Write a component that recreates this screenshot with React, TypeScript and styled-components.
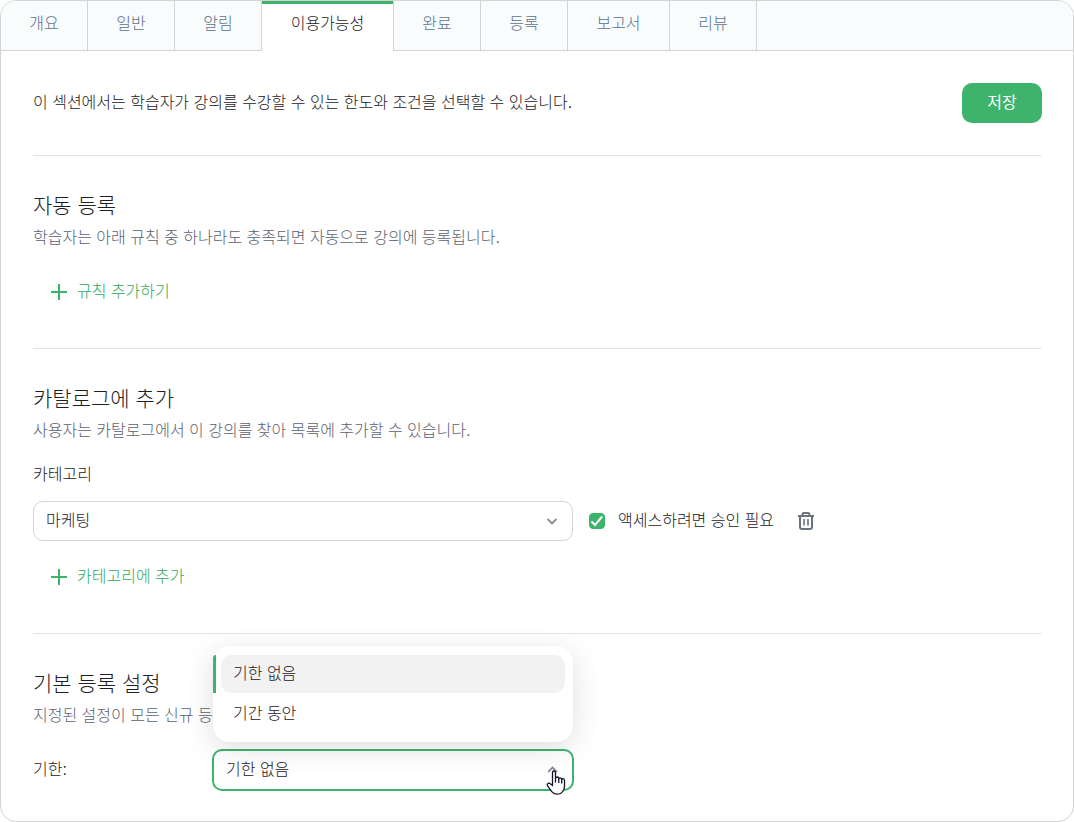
import React, { useState } from "react";
import styled, { createGlobalStyle } from "styled-components";

const GlobalStyle = createGlobalStyle`
  *, *::before, *::after { box-sizing: border-box; }
  body {
    margin: 0;
    background: #fff;
    color: #1c2024;
    font-family: "Liberation Sans", "Noto Sans CJK KR", sans-serif;
    font-size: 16px;
    font-weight: 300;
    line-height: 24px;
  }
  button, select, input { font: inherit; color: inherit; }
`;

const Card = styled.main`
  display: flex;
  flex-direction: column;
  min-height: 100vh;
  border: 1px solid #d4d4d4;
  border-radius: 16px;
  overflow: hidden;
  background: #fff;
`;

const TabBar = styled.nav`
  display: flex;
  height: 50px;
  background: #f8fcfd;
  box-shadow: inset 0 -1px 0 #d4d4d4;
`;

const Tab = styled.button<{ $active: boolean; $chars: number }>`
  flex: 0 0 ${(p) => 57 + p.$chars * 15}px;
  padding: 0 0 4px;
  border: 0;
  border-right: 1px solid #d4d4d4;
  background: ${(p) => (p.$active ? "#fff" : "transparent")};
  box-shadow: ${(p) => (p.$active ? "inset 0 3px 0 #3db36c" : "none")};
  color: ${(p) => (p.$active ? "#1c2024" : "#5f7088")};
  font-weight: 300;
  white-space: nowrap;
  cursor: pointer;
`;

const Content = styled.div`
  padding: 0 31px 0 32px;
`;

const Intro = styled.header`
  display: flex;
  align-items: center;
  justify-content: space-between;
  gap: 16px;
  padding: 32px 0;
`;

const IntroText = styled.p`
  margin: 0;
`;

const SaveButton = styled.button`
  width: 80px;
  height: 40px;
  padding: 0;
  border: 0;
  border-radius: 10px;
  background: #3db36c;
  color: #fff;
  font-weight: 400;
  cursor: pointer;
`;

const Section = styled.section`
  padding: 34px 0 35px;
  border-top: 1px solid #e4e4e4;

  &:last-child {
    padding-bottom: 30px;
  }
`;

const Title = styled.h2`
  margin: 0;
  font-size: 21px;
  font-weight: 300;
  line-height: 32px;
`;

const Description = styled.p`
  margin: 4px 0 0;
  color: #5b6270;
`;

const AddButton = styled.button`
  display: flex;
  align-items: center;
  gap: 9px;
  height: 42px;
  padding: 0 17px;
  border: 0;
  background: none;
  color: #2fa860;
  cursor: pointer;

  svg {
    color: #3db36c;
  }
`;

const RuleActions = styled.div`
  margin-top: 21px;
`;

const CatalogActions = styled.div`
  margin-top: 15px;
`;

const CategoryLabel = styled.label`
  display: block;
  margin: 20px 0 14px;
`;

const CategoryRow = styled.div`
  display: flex;
  align-items: center;
  gap: 16px;
`;

const SelectBox = styled.div<{ $width: number }>`
  position: relative;
  flex: 0 1 ${(p) => p.$width}px;
`;

const Select = styled.select<{ $open?: boolean }>`
  display: block;
  appearance: none;
  width: 100%;
  height: ${(p) => (p.$open ? 42 : 40)}px;
  padding: 0 40px 0 12px;
  border: ${(p) => (p.$open ? "2px solid #3db36c" : "1px solid #d4d4d4")};
  border-radius: 10px;
  outline: 0;
  background: #fff;
`;

const Chevron = styled.svg`
  position: absolute;
  top: 50%;
  right: 16px;
  margin-top: -5px;
  pointer-events: none;
`;

const Menu = styled.ul`
  position: absolute;
  left: 1px;
  right: 1px;
  bottom: calc(100% + 7px);
  margin: 0;
  padding: 9px 8px;
  height: 96px;
  list-style: none;
  border-radius: 16px;
  background: #fff;
  box-shadow: 0 6px 28px rgba(20, 40, 30, 0.15);
`;

const Option = styled.li<{ $selected?: boolean }>`
  position: relative;
  height: 38px;
  margin-bottom: 2px;
  padding: 7px 12px;
  border-radius: 10px;
  background: ${(p) => (p.$selected ? "#f2f2f2" : "transparent")};

  &::before {
    content: "";
    display: ${(p) => (p.$selected ? "block" : "none")};
    position: absolute;
    top: 0;
    left: -8px;
    width: 3px;
    height: 38px;
    border-radius: 3px 0 0 0;
    background: #3db36c;
  }
`;

const CheckLabel = styled.label`
  display: flex;
  align-items: center;
  gap: 13px;
  white-space: nowrap;
`;

const Checkbox = styled.input`
  appearance: none;
  width: 16px;
  height: 16px;
  margin: 0;
  border: 1px solid #3db36c;
  border-radius: 4px;
  background: #fff;
`;

const CheckMark = styled.span`
  position: relative;
  display: flex;

  ${Checkbox}:checked {
    background: #3db36c;
  }

  svg {
    position: absolute;
    inset: 0;
    pointer-events: none;
  }
`;

const IconButton = styled.button`
  display: flex;
  padding: 4px 8px;
  border: 0;
  background: none;
  color: #6b7280;
  cursor: pointer;
`;

const TermRow = styled.div`
  display: flex;
  align-items: center;
  margin-top: 21px;
`;

const TermLabel = styled.label`
  flex: 0 0 179px;
`;

const Pointer = styled.svg`
  position: absolute;
  right: 8px;
  top: 21px;
  pointer-events: none;
`;

const tabs = ["개요", "일반", "알림", "이용가능성", "완료", "등록", "보고서", "리뷰"];

const PlusIcon = () => (
  <svg width="18" height="18" viewBox="0 0 18 18" fill="none" stroke="currentColor" strokeWidth="2" aria-hidden="true">
    <path d="M9 1v16M1 9h16" />
  </svg>
);

const TrashIcon = () => (
  <svg width="16" height="18" viewBox="0 0 16 18" fill="none" stroke="currentColor" strokeWidth="2" aria-hidden="true">
    <path d="M0 4h16" />
    <path d="M4.500 4V2.400Q4.500 1 6 1h4q1.500 0 1.500 1.400V4" />
    <path d="M2 4v11q0 2 2 2h8q2 0 2-2V4" />
    <path d="M6 7v6.500M10 7v6.500" strokeWidth="1.600" />
  </svg>
);

export default function App() {
  const [active, setActive] = useState("이용가능성");
  return (
    <>
      <GlobalStyle />
      <Card>
        <TabBar>
          {tabs.map((tab) => (
            <Tab key={tab} $active={tab === active} $chars={tab.length} onClick={() => setActive(tab)}>
              {tab}
            </Tab>
          ))}
        </TabBar>
        <Content>
          <Intro>
            <IntroText>이 섹션에서는 학습자가 강의를 수강할 수 있는 한도와 조건을 선택할 수 있습니다.</IntroText>
            <SaveButton>저장</SaveButton>
          </Intro>

          <Section>
            <Title>자동 등록</Title>
            <Description>학습자는 아래 규칙 중 하나라도 충족되면 자동으로 강의에 등록됩니다.</Description>
            <RuleActions>
              <AddButton>
                <PlusIcon />
                규칙 추가하기
              </AddButton>
            </RuleActions>
          </Section>

          <Section>
            <Title>카탈로그에 추가</Title>
            <Description>사용자는 카탈로그에서 이 강의를 찾아 목록에 추가할 수 있습니다.</Description>
            <CategoryLabel htmlFor="category">카테고리</CategoryLabel>
            <CategoryRow>
              <SelectBox $width={540}>
                <Select id="category" defaultValue="마케팅">
                  <option>마케팅</option>
                </Select>
                <Chevron width="10" height="10" viewBox="0 0 10 10" fill="none" stroke="#8a8a8a" strokeWidth="1.800">
                  <path d="M0.500 3l4.500 4.500L9.500 3" />
                </Chevron>
              </SelectBox>
              <CheckLabel>
                <CheckMark>
                  <Checkbox type="checkbox" defaultChecked />
                  <svg width="16" height="16" viewBox="0 0 16 16" fill="none" stroke="#fff" strokeWidth="2">
                    <path d="M2.500 8.500l3.500 3.500L13.200 3.500" />
                  </svg>
                </CheckMark>
                액세스하려면 승인 필요
              </CheckLabel>
              <IconButton aria-label="삭제">
                <TrashIcon />
              </IconButton>
            </CategoryRow>
            <CatalogActions>
              <AddButton>
                <PlusIcon />
                카테고리에 추가
              </AddButton>
            </CatalogActions>
          </Section>

          <Section>
            <Title>기본 등록 설정</Title>
            <Description>지정된 설정이 모든 신규 등</Description>
            <TermRow>
              <TermLabel htmlFor="term">기한:</TermLabel>
              <SelectBox $width={362}>
                <Select id="term" $open defaultValue="기한 없음">
                  <option>기한 없음</option>
                  <option>기간 동안</option>
                </Select>
                <Chevron width="10" height="10" viewBox="0 0 10 10" fill="none" stroke="#8a8a8a" strokeWidth="1.800">
                  <path d="M0 7l4.500-4.500L9 7" />
                </Chevron>
                <Menu role="listbox" aria-label="기한">
                  <Option role="option" aria-selected $selected>기한 없음</Option>
                  <Option role="option" aria-selected={false}>기간 동안</Option>
                </Menu>
                <Pointer width="20" height="26" viewBox="0 0 20 26" fill="#fff" stroke="#14142b" strokeWidth="1.300" strokeLinejoin="round" strokeLinecap="round">
                  <path d="M6.500 15.500V3Q6.500 1 8 1t1.500 2v5.500Q9.700 7 11.200 7t1.600 1.700Q13 7.800 14.200 7.800t1.500 1.700Q16 8.600 17 8.600q1.500 0 1.500 1.900V16q0 3-1.500 5-2 3.200-6 3.200-3.200 0-5.200-2.600L1.600 15.800Q.8 14.300 2 13.400q1.300-.6 2.600.6z" />
                  <path d="M9.500 8.500V12M12.800 8.700V12.500M15.700 9.500V13" fill="none" />
                </Pointer>
              </SelectBox>
            </TermRow>
          </Section>
        </Content>
      </Card>
    </>
  );
}
